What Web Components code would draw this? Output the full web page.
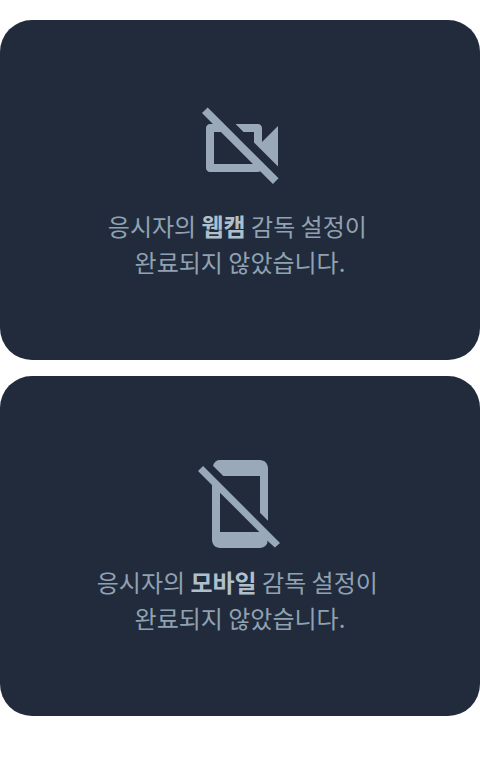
<!DOCTYPE html>
<html lang="ko">
<head>
<meta charset="utf-8">
<meta name="viewport" content="width=device-width, initial-scale=1">
<title>감독 설정</title>
<style>
body { margin: 0; background: #fff; font-family: "Noto Sans CJK KR", sans-serif; font-feature-settings: "locl" 0; }
</style>
</head>
<body>
<proctor-list>
  <proctor-card icon="webcam">응시자의 <strong>웹캠</strong> 감독 설정이&nbsp;<br>완료되지 않았습니다.</proctor-card>
  <proctor-card icon="mobile">응시자의 <strong>모바일</strong> 감독 설정이&nbsp;<br>완료되지 않았습니다.</proctor-card>
</proctor-list>
<script>
class OffIcon extends HTMLElement {
  static shapes = {
    webcam: ['-.5 0 24 24', 'M9.56 8l-2-2-4.15-4.14L2 3.27 4.73 6H4c-.55 0-1 .45-1 1v10c0 .55.45 1 1 1h12c.21 0 .39-.08.55-.18L19.73 21l1.41-1.41-8.86-8.86L9.56 8zM5 16V8h1.73l8 8H5zm10-8v2.61l6 6V6.5l-4 4V7c0-.55-.45-1-1-1h-5.61l2 2H15z'],
    mobile: ['0 0 24 24', 'M17 5v9.17l2 2V3c0-1.1-.9-2-2-2H7c-.85 0-1.46.5-1.76 1.41L7.83 5H17zM2.77 2.5L1.5 3.77 5 7.27V21c0 1.1.9 2 2 2h10c.85 0 1.58-.54 1.87-1.3l-.1-.56 1.96 1.76L22 21.73 2.77 2.5zM7 19V9.17L16.83 19H7z']
  };
  connectedCallback() {
    const [box, path] = OffIcon.shapes[this.getAttribute('name')];
    this.attachShadow({ mode: 'open' }).innerHTML = `
      <style>
        :host { display: block; width: 96px; height: 96px; color: #9aa9b9; }
        svg { display: block; width: 100%; height: 100%; fill: currentColor; }
      </style>
      <svg viewBox="${box}" aria-hidden="true"><path d="${path}"/></svg>`;
  }
}

class ProctorCard extends HTMLElement {
  connectedCallback() {
    this.attachShadow({ mode: 'open' }).innerHTML = `
      <style>
        :host {
          display: flex; flex-direction: column; align-items: center; gap: 12px;
          padding: 80px 16px; border-radius: 32px;
          background: #212b3c; color: #90a2b2;
        }
        p { margin: 0; font-size: 24px; line-height: 36px; text-align: center; }
        ::slotted(strong) { font-weight: 700; color: #b0c0cb; }
      </style>
      <off-icon name="${this.getAttribute('icon')}"></off-icon>
      <p><slot></slot></p>`;
  }
}

class ProctorList extends HTMLElement {
  connectedCallback() {
    this.attachShadow({ mode: 'open' }).innerHTML = `
      <style>
        :host { display: flex; flex-direction: column; gap: 16px; padding: 20px 0; }
      </style>
      <slot></slot>`;
  }
}

customElements.define('off-icon', OffIcon);
customElements.define('proctor-card', ProctorCard);
customElements.define('proctor-list', ProctorList);
</script>
</body>
</html>
